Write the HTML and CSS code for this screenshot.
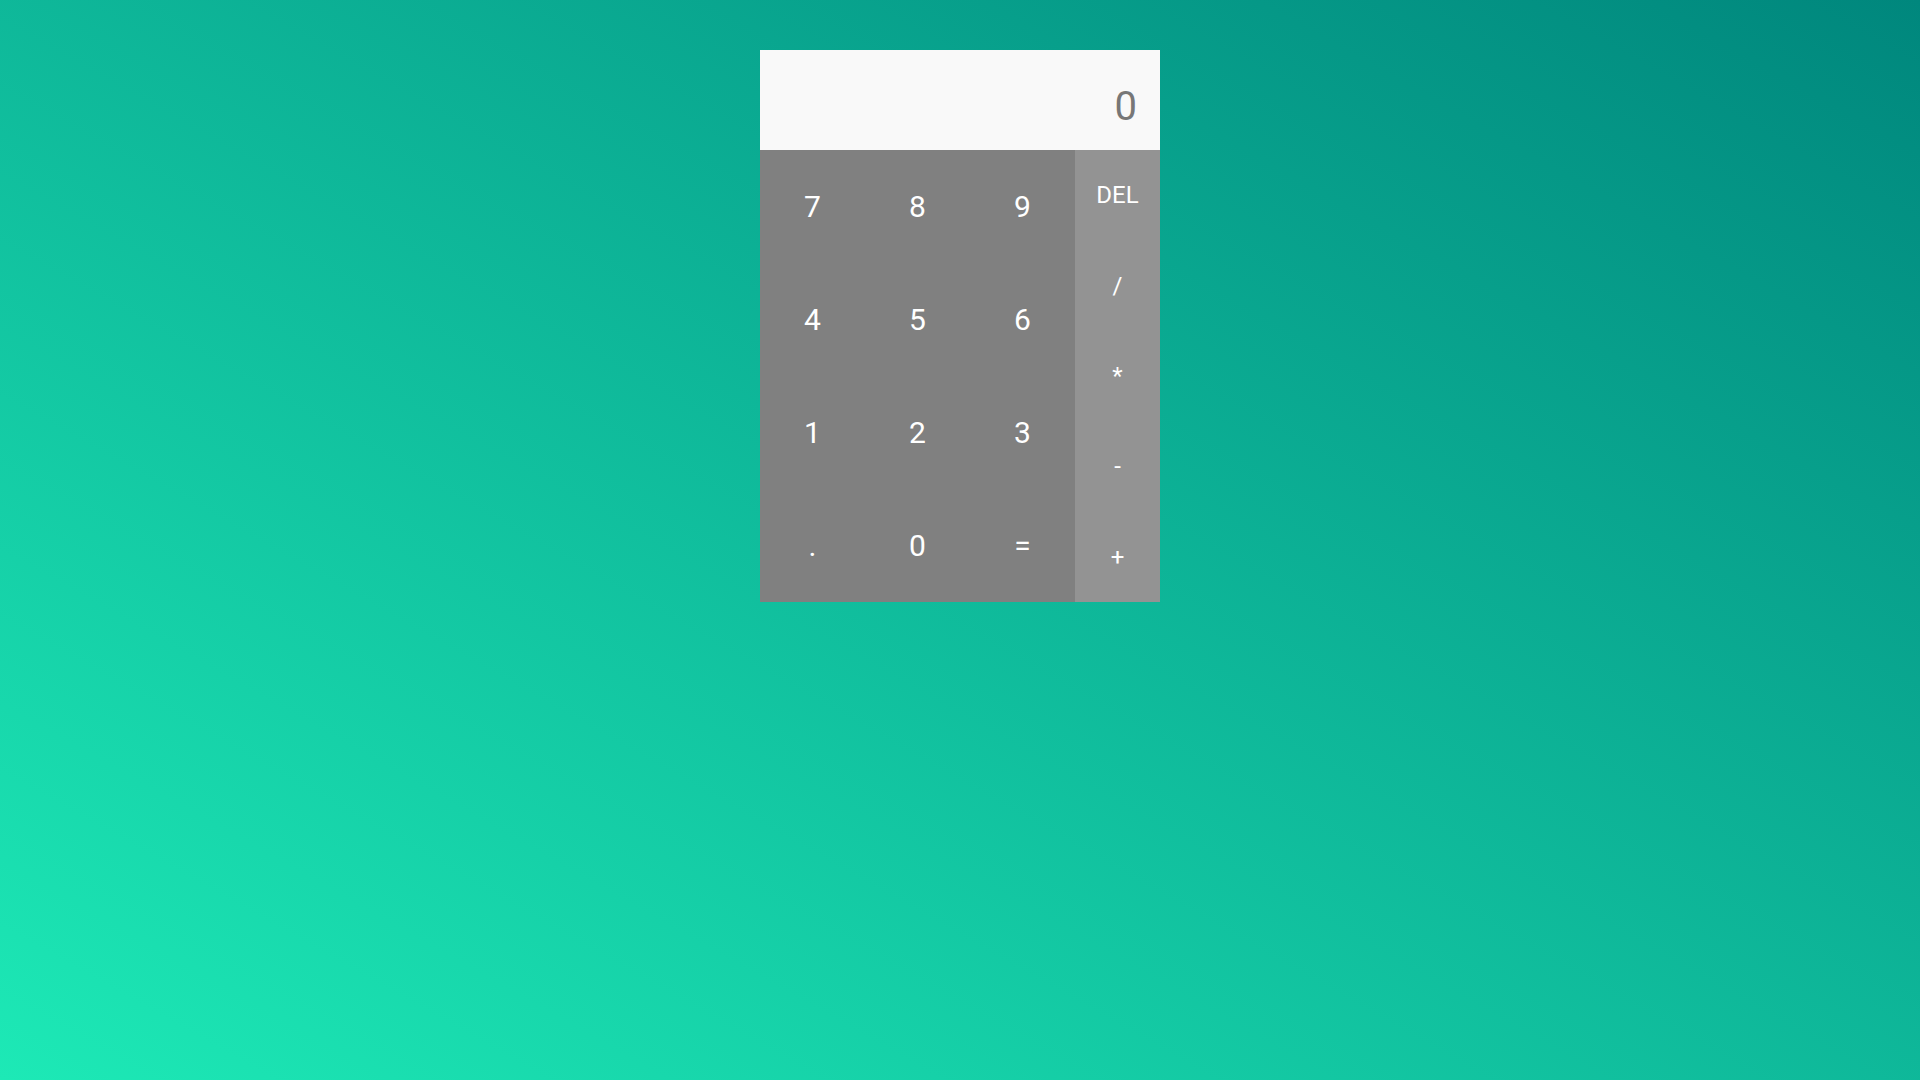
FILE: index.html
```html
<!DOCTYPE html>
<html lang="en">
<head>
<meta charset="utf-8">
<title>Calculator</title>
<link rel="stylesheet" href="styles.css">
</head>
<body>
<div class="calculator">
  <div class="display">0</div>
  <div class="pad">
    <div class="numbers">
      <button class="key">7</button>
      <button class="key">8</button>
      <button class="key">9</button>
      <button class="key">4</button>
      <button class="key">5</button>
      <button class="key">6</button>
      <button class="key">1</button>
      <button class="key">2</button>
      <button class="key">3</button>
      <button class="key">.</button>
      <button class="key">0</button>
      <button class="key">=</button>
    </div>
    <div class="operators">
      <button class="op">DEL</button>
      <button class="op">/</button>
      <button class="op">*</button>
      <button class="op">-</button>
      <button class="op">+</button>
    </div>
  </div>
</div>
</body>
</html>
```
FILE: styles.css
```css
html, body {
  margin: 0;
  padding: 0;
  height: 100%;
}
body {
  background: linear-gradient(to top right, #1de9b6, #00877d);
  font-family: Roboto, "Noto Sans", sans-serif;
  display: flex;
  justify-content: center;
  align-items: flex-start;
}
.calculator {
  margin-top: 50px;
  width: 400px;
  display: flex;
  flex-direction: column;
}
.display {
  height: 100px;
  box-sizing: border-box;
  background: #f9f9f9;
  color: #777777;
  font-size: 40px;
  display: flex;
  justify-content: flex-end;
  align-items: flex-end;
  padding: 0 23px 20px;
}
.pad {
  display: flex;
  height: 452px;
}
.numbers {
  width: 315px;
  background: #808080;
  display: grid;
  grid-template-columns: repeat(3, 1fr);
  grid-template-rows: repeat(4, 1fr);
}
.operators {
  flex: 1;
  background: #939393;
  display: flex;
  flex-direction: column;
}
.key, .op {
  border: none;
  background: transparent;
  color: #ffffff;
  font-family: Roboto, "Noto Sans", sans-serif;
  padding: 0;
  margin: 0;
  display: flex;
  align-items: center;
  justify-content: center;
}
.key {
  font-size: 30px;
}
.op {
  flex: 1;
  font-size: 24px;
}
```
